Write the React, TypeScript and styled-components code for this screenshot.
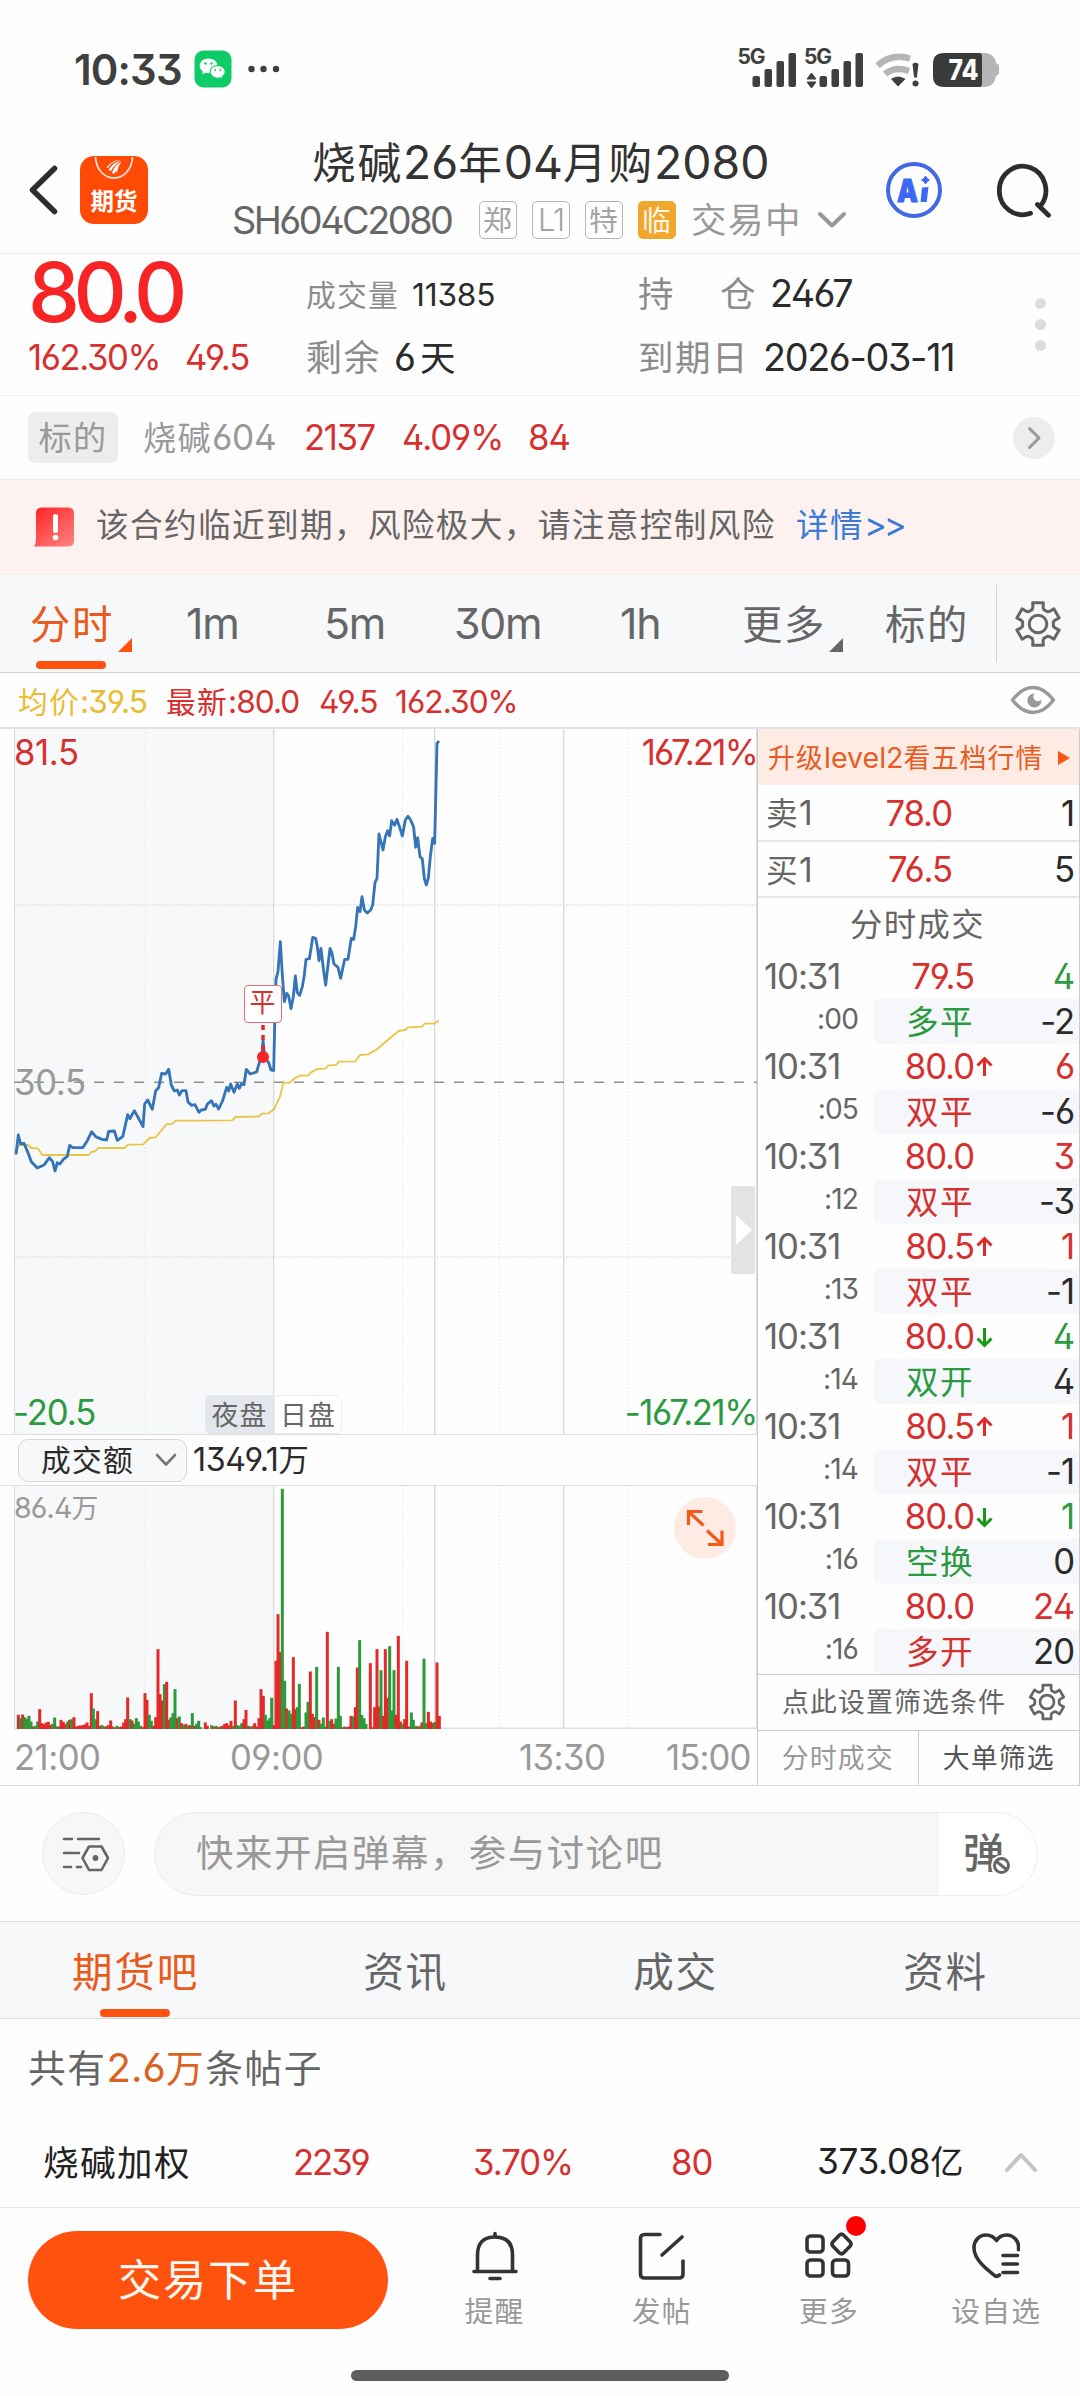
import React from "react";
import styled, { createGlobalStyle } from "styled-components";

const RED = "#d6302f";
const GREEN = "#2c9a41";
const ORANGE = "#ff520e";
const GREY = "#999";
const DARK = "#666";
const INK = "#2b2b2b";

const Global = createGlobalStyle`
  * { box-sizing: border-box; }
  html, body { margin: 0; padding: 0; background: #fefefe; }
  body { font-family: Inter, "Noto Sans CJK SC", sans-serif; }
  svg { display: block; flex: none; }
`;

/* ---------- text ---------- */

const Label = styled.span<{ $size: number; $color?: string; $weight?: number; $ls?: number; $lh?: number }>`
  display: inline-block;
  flex: none;
  white-space: pre;
  font-family: Inter, "Noto Sans CJK SC", sans-serif;
  font-feature-settings: "ss01" 1, "calt" 0;
  font-size: ${(p) => p.$size * 1.02}px;
  line-height: ${(p) => p.$size * (p.$lh ?? 1.2)}px;
  letter-spacing: ${(p) => p.$ls ?? -0.03}em;
  font-weight: ${(p) => p.$weight ?? 400};
  color: ${(p) => p.$color ?? "inherit"};
`;

const Han = styled.span<{ $size: number }>`
  font-family: "Noto Sans CJK SC", sans-serif;
  font-size: ${(p) => p.$size * 0.96}px;
  letter-spacing: ${(p) => p.$size * 0.04}px;
  line-height: 0;
`;

type TProps = { s: number; c?: string; w?: number; ls?: number; lh?: number; children: string };

function T({ s, c, w, ls, lh, children }: TProps) {
  const runs = children.split(/([\u3000-\u9fff\uff00-\uffef]+)/).filter(Boolean);
  return (
    <Label $size={s} $color={c} $weight={w} $ls={ls} $lh={lh}>
      {runs.map((r, i) => (/[\u3000-\u9fff\uff00-\uffef]/.test(r) ? <Han key={i} $size={s}>{r}</Han> : r))}
    </Label>
  );
}

/* ---------- layout parts ---------- */

const Screen = styled.main`
  width: 1080px;
  height: 2396px;
  display: flex;
  flex-direction: column;
  background: #fefefe;
  color: ${INK};
  overflow: hidden;
`;

const Bar = styled.div<{ $h: number; $bg?: string; $line?: string; $pl?: number }>`
  display: flex;
  align-items: center;
  flex: none;
  height: ${(p) => p.$h}px;
  padding-left: ${(p) => p.$pl ?? 0}px;
  background: ${(p) => p.$bg ?? "transparent"};
  border-bottom: ${(p) => (p.$line ? `1px solid ${p.$line}` : "none")};
`;

const Cell = styled.div<{ $w: number; $align?: string; $pt?: number; $pb?: number }>`
  display: flex;
  align-items: center;
  flex: none;
  width: ${(p) => p.$w}px;
  padding-top: ${(p) => p.$pt ?? 0}px;
  padding-bottom: ${(p) => p.$pb ?? 0}px;
  justify-content: ${(p) => p.$align ?? "flex-start"};
`;

const StatusBar = styled.header`
  display: flex;
  align-items: center;
  height: 138px;
  padding-left: 74px;
`;

const HeaderBar = styled.header`
  display: flex;
  height: 116px;
  border-bottom: 1px solid #ebebeb;
`;

const HeaderSide = styled.div<{ $w: number; $pl: number; $gap: number }>`
  width: ${(p) => p.$w}px;
  padding: 0 0 0 ${(p) => p.$pl}px;
  height: 104px;
  display: flex;
  align-items: center;
  gap: ${(p) => p.$gap}px;
`;

const TitleBlock = styled.div`
  width: 656px;
  display: flex;
  flex-direction: column;
`;

const TitleLine = styled.div`
  height: 48px;
  display: flex;
  align-items: center;
  padding-left: 90px;
`;

const SubLine = styled.div`
  height: 68px;
  display: flex;
  align-items: center;
  padding-left: 10px;
`;

const Badge = styled.span<{ $solid?: boolean }>`
  width: 38px;
  height: 38px;
  margin-right: 15px;
  border-radius: 5px;
  border: 1.5px solid ${(p) => (p.$solid ? "#f0a72c" : "#b5b5b5")};
  background: ${(p) => (p.$solid ? "#f0a72c" : "transparent")};
  color: ${(p) => (p.$solid ? "#fff6e6" : "#a3a3a3")};
  display: flex;
  align-items: center;
  justify-content: center;
`;

const QuoteGrid = styled.section`
  display: grid;
  grid-template-columns: 306px 332px 380px 62px;
  height: 142px;
  border-bottom: 1px solid #f1f1f1;
`;

const QuoteCol = styled.div<{ $pl?: number }>`
  display: flex;
  flex-direction: column;
  padding-left: ${(p) => p.$pl ?? 0}px;
`;

const Line = styled.div<{ $h: number }>`
  display: flex;
  align-items: center;
  height: ${(p) => p.$h}px;
`;

const Dots = styled.div`
  display: flex;
  flex-direction: column;
  align-items: center;
  gap: 10px;
  padding: 44px 18px 0 0;
`;

const Dot = styled.i`
  width: 11px;
  height: 11px;
  border-radius: 50%;
  background: #ddd;
`;

const GreyTag = styled.span`
  width: 90px;
  height: 51px;
  border-radius: 7px;
  background: #ededed;
  display: flex;
  align-items: center;
  justify-content: center;
`;

const RoundArrow = styled.span`
  width: 42px;
  height: 42px;
  border-radius: 50%;
  background: #ededed;
  display: flex;
  align-items: center;
  justify-content: center;
`;

const PeriodTab = styled.div<{ $w: number; $active?: boolean }>`
  position: relative;
  width: ${(p) => p.$w}px;
  height: 97px;
  flex: none;
  display: flex;
  align-items: center;
  color: ${(p) => (p.$active ? "#ea5a1b" : DARK)};
`;

const Corner = styled.i<{ $x: number; $c: string }>`
  position: absolute;
  left: ${(p) => p.$x}px;
  top: 63px;
  width: 14px;
  height: 14px;
  background: ${(p) => p.$c};
  clip-path: polygon(100% 0, 100% 100%, 0 100%);
`;

const Underline = styled.i<{ $x: number; $y: number; $h: number }>`
  position: absolute;
  left: ${(p) => p.$x}px;
  top: ${(p) => p.$y}px;
  width: 70px;
  height: ${(p) => p.$h}px;
  border-radius: 4px;
  background: ${ORANGE};
`;

const VRule = styled.i`
  width: 1px;
  height: 77px;
  background: #d0d2d6;
`;

const Market = styled.section`
  display: flex;
  height: 1059px;
  border-top: 2px solid #e3e3e3;
  border-bottom: 1px solid #d9d9d9;
`;

const ChartSide = styled.div`
  width: 757px;
  display: flex;
  flex-direction: column;
`;

const Plot = styled.div<{ $h: number }>`
  position: relative;
  height: ${(p) => p.$h}px;
`;

const Pin = styled.div<{ $x?: number; $r?: number; $y: number }>`
  position: absolute;
  display: flex;
  ${(p) => (p.$r !== undefined ? `right: ${p.$r}px;` : `left: ${p.$x}px;`)}
  top: ${(p) => p.$y}px;
`;

const Marker = styled.div`
  position: absolute;
  left: 244px;
  top: 256px;
  width: 38px;
  height: 38px;
  border: 1.5px solid #dc6f6f;
  border-radius: 4px;
  background: #fff;
  display: flex;
  justify-content: center;
`;

const Sessions = styled.div`
  position: absolute;
  left: 205px;
  bottom: 0;
  display: flex;
`;

const Session = styled.span<{ $night?: boolean }>`
  width: ${(p) => (p.$night ? 69 : 68)}px;
  height: 39px;
  display: flex;
  align-items: center;
  justify-content: center;
  color: ${DARK};
  background: ${(p) => (p.$night ? "#e3e6ed" : "#fff")};
  border: ${(p) => (p.$night ? "none" : "1px solid #ebebeb")};
  border-radius: ${(p) => (p.$night ? "6px 0 0 6px" : "0 6px 6px 0")};
`;

const Handle = styled.div`
  position: absolute;
  left: 731px;
  top: 457px;
  width: 24px;
  height: 88px;
  border-radius: 2px;
  background: #e3e3e3;
  display: flex;
  align-items: center;
  justify-content: flex-end;
  padding-right: 3px;
`;

const IndicatorRow = styled.div`
  height: 52px;
  display: flex;
  align-items: center;
  padding-left: 18px;
  border-top: 1px solid #ddd;
  border-bottom: 1px solid #ddd;
`;

const Picker = styled.div`
  width: 169px;
  height: 43px;
  border: 1px solid #d3d6da;
  border-radius: 10px;
  background: #f7f8fa;
  display: flex;
  align-items: center;
  justify-content: space-between;
  padding: 0 8px 0 22px;
  margin-right: 6px;
`;

const FullScreen = styled.div`
  position: absolute;
  left: 674px;
  top: 11px;
  width: 62px;
  height: 62px;
  border-radius: 50%;
  background: #feebe4;
  display: flex;
  align-items: center;
  justify-content: center;
`;

const Book = styled.aside`
  width: 323px;
  border-left: 1px solid #ccc;
  border-right: 1px solid #ccc;
  display: flex;
  flex-direction: column;
`;

const Promo = styled.div`
  height: 56px;
  background: #feece4;
  display: flex;
  align-items: center;
  padding: 1px 0 0 10px;
  gap: 15px;
`;

const LevelRow = styled.div<{ $h: number }>`
  height: ${(p) => p.$h}px;
  border-bottom: 2px solid #e6e6e6;
  display: grid;
  grid-template-columns: 100px 86px 1fr;
  align-items: center;
  padding: 1px 5px 0 8px;
  > :nth-child(n + 2) { justify-self: end; }
`;

const BookTitle = styled.div`
  height: 56px;
  display: flex;
  align-items: center;
  justify-content: center;
  padding: 0 2px 3px 0;
`;

const Trade = styled.div`
  height: 90px;
  display: grid;
  grid-template: 45px 45px / 116px 1fr;
`;

const TradeTime = styled.div<{ $sec?: boolean }>`
  display: flex;
  align-items: center;
  padding: ${(p) => (p.$sec ? "0 16px 5px 0" : "0 0 0 6px")};
  justify-content: ${(p) => (p.$sec ? "flex-end" : "flex-start")};
`;

const TradeCell = styled.div<{ $shade?: boolean }>`
  display: grid;
  grid-template-columns: 100px 20px 1fr;
  align-items: center;
  padding-right: 5px;
  border-radius: 6px 0 0 6px;
  background: ${(p) => (p.$shade ? "#f6f7fa" : "transparent")};
  > :first-child { justify-self: end; }
  > :last-child { justify-self: end; }
`;

const FilterRow = styled.div`
  height: 57px;
  border-top: 1px solid #ccc;
  border-bottom: 1px solid #ccc;
  display: flex;
  align-items: center;
  padding: 0 0 1px 24px;
  gap: 22px;
`;

const BookTabs = styled.div`
  flex: 1;
  display: grid;
  grid-template-columns: 1fr 1fr;
`;

const BookTab = styled.div<{ $first?: boolean }>`
  display: flex;
  align-items: center;
  justify-content: center;
  border-right: ${(p) => (p.$first ? "1px solid #ccc" : "none")};
`;

const ChatRow = styled.section`
  height: 136px;
  display: flex;
  align-items: center;
  padding-left: 42px;
  gap: 29px;
  border-bottom: 1px solid #dcdde0;
`;

const ChatSettings = styled.div`
  width: 83px;
  height: 83px;
  border-radius: 50%;
  border: 1px solid #ececec;
  background: #f7f7f7;
  display: flex;
  align-items: center;
  justify-content: center;
  padding-left: 4px;
`;

const ChatPill = styled.div`
  width: 884px;
  height: 84px;
  border-radius: 42px;
  border: 1.5px solid #ececec;
  background: #f7f7f7;
  display: flex;
  align-items: center;
  overflow: hidden;
`;

const ChatHint = styled.div`
  flex: 1;
  padding-left: 41px;
`;

const ChatToggle = styled.div`
  position: relative;
  width: 100px;
  height: 82px;
  border-left: 1.5px solid #ececec;
  background: #fff;
  display: flex;
  align-items: center;
  padding: 0 0 2px 25px;
`;

const BanBadge = styled.span`
  position: absolute;
  left: 53px;
  top: 42px;
`;

const SectionTabs = styled.nav`
  height: 97px;
  display: grid;
  grid-template-columns: repeat(4, 1fr);
  background: #f7f8fa;
  border-bottom: 1px solid #dcdde0;
`;

const SectionTab = styled.div<{ $active?: boolean }>`
  position: relative;
  display: flex;
  align-items: center;
  justify-content: center;
  padding: 3px 0 0 1px;
  color: ${(p) => (p.$active ? "#ea5a1b" : DARK)};
`;

const ActionBar = styled.footer`
  height: 140px;
  display: flex;
  align-items: flex-start;
  padding: 23px 0 0 28px;
`;

const TradeButton = styled.button`
  width: 360px;
  height: 98px;
  border: 0;
  padding: 0;
  border-radius: 49px;
  background: ${ORANGE};
  display: flex;
  align-items: center;
  justify-content: center;
  margin-right: 23px;
`;

const Action = styled.div`
  position: relative;
  width: 167.3px;
  display: flex;
  flex-direction: column;
  align-items: center;
  gap: 12px;
`;

const Notice = styled.i`
  position: absolute;
  left: 101px;
  top: -15px;
  width: 20px;
  height: 20px;
  border-radius: 50%;
  background: #fe0000;
`;

const HomeBar = styled.div`
  width: 378px;
  height: 11px;
  border-radius: 6px;
  background: #5e5e5e;
  margin: 22px auto 0;
`;

/* ---------- icons ---------- */

const StatusSvg = styled.svg`
  overflow: visible;
`;

function Chevron({ w, h, d, c, sw }: { w: number; h: number; d: string; c: string; sw: number }) {
  return (
    <svg width={w} height={h} viewBox={`0 0 ${w} ${h}`} fill="none" stroke={c} strokeWidth={sw} strokeLinecap="round" strokeLinejoin="round">
      <path d={d} />
    </svg>
  );
}

function Gear({ size, sw }: { size: number; sw: number }) {
  const pts: string[] = [];
  for (let k = 0; k < 6; k++) {
    const a = k * 60 - 90;
    const step: [number, number][] = [[-22, 15.5], [-17, 17.5], [-14, 22], [14, 22], [17, 17.5], [22, 15.5]];
    step.forEach(([da, r]) => {
      const t = ((a + da) * Math.PI) / 180;
      pts.push(`${(24 + r * Math.cos(t)).toFixed(2)},${(24 + r * Math.sin(t)).toFixed(2)}`);
    });
  }
  return (
    <svg width={size} height={size} viewBox="0 0 48 48" fill="none" stroke="#666" strokeWidth={sw} strokeLinejoin="round">
      <polygon points={pts.join(" ")} />
      <circle cx="24" cy="24" r="8.8" />
    </svg>
  );
}

function Signal() {
  return (
    <g fill="#3f3f3f">
      <rect x="0" y="23" width="7.5" height="11" rx="2" />
      <rect x="12" y="16" width="7.5" height="18" rx="2" />
      <rect x="24" y="8" width="7.5" height="26" rx="2" />
      <rect x="36" y="0" width="7.5" height="34" rx="2" />
    </g>
  );
}

const svgText = { fontFamily: "Inter, sans-serif" };

function StatusIcons() {
  return (
    <StatusSvg width="264" height="64" viewBox="736 36 264 64">
      <text x="737.5" y="63" fontSize="21" fontWeight="700" fill="#3f3f3f" textLength="28" {...svgText}>5G</text>
      <g transform="translate(752.5 52)"><Signal /></g>
      <text x="804" y="63" fontSize="21" fontWeight="700" fill="#3f3f3f" textLength="28" {...svgText}>5G</text>
      <path d="M807 78l4.500-6 4.500 6zM807 81l4.500 6 4.500-6z" fill="#3f3f3f" stroke="#3f3f3f" strokeWidth="1" strokeLinejoin="round" />
      <g transform="translate(819.5 52)"><Signal /></g>
      <path d="M877.500 64.500Q892 52 910 57.500" fill="none" stroke="#b5b5b5" strokeWidth="6.500" />
      <path d="M885 73Q895 65 909 70" fill="none" stroke="#b5b5b5" strokeWidth="6.500" />
      <path d="M891 78Q898 73 905.500 78L898 85.500Z" fill="#3f3f3f" />
      <path d="M912.500 63q3-2.500 6 0l-1.600 13.500h-2.800z" fill="#3f3f3f" />
      <circle cx="915.500" cy="82.500" r="3" fill="#3f3f3f" />
      <path d="M982 52h3q9 0 11 10l3 2v9l-3 2q-2 11-11 11h-3z" fill="#b5b5b5" />
      <path d="M944 52h36q2 0 2 2v30q0 2-2 2h-36q-11 0-11-11V63q0-11 11-11z" fill="#3a3a3a" />
      <text x="948.500" y="79" fontSize="29" fontWeight="800" fill="#fff" textLength="30" lengthAdjust="spacingAndGlyphs" {...svgText}>74</text>
    </StatusSvg>
  );
}

function WeChat() {
  return (
    <svg width="38" height="38" viewBox="0 0 38 38">
      <rect x=".5" y=".5" width="37" height="37" rx="9" fill="#0dcb66" />
      <path d="M14.500 8.500c-5.200 0-8.800 3.200-8.800 7.300 0 2.500 1.300 4.400 3.300 5.700l-.8 3 3.200-1.700c1 .3 2 .4 3.100.4 5.200 0 8.900-3.200 8.900-7.400s-3.700-7.300-8.900-7.300z" fill="#fff" />
      <path d="M23.700 15.500c-4.400 0-7.600 2.800-7.600 6.400s3.200 6.400 7.600 6.400c.9 0 1.800-.1 2.700-.4l2.700 1.400-.7-2.500c1.800-1.200 2.900-2.900 2.900-4.900 0-3.600-3.200-6.400-7.600-6.400z" fill="#fff" stroke="#0dcb66" strokeWidth="1.200" />
      <g fill="#0dcb66"><circle cx="11.500" cy="13.500" r="1.200" /><circle cx="17.500" cy="13.500" r="1.200" /><circle cx="21.200" cy="20" r="1" /><circle cx="26.300" cy="20" r="1" /></g>
    </svg>
  );
}

function AppLogo() {
  return (
    <svg width="68" height="68" viewBox="0 0 68 68">
      <rect width="68" height="68" rx="14" fill="#ff4a06" />
      <path d="M15.500 1C16 13 24 22 34 22S52 13 52.500 1" fill="none" stroke="#ffe3d8" strokeWidth="1.800" />
      <path d="M26.500 11.500Q33 3.500 40 4Q31 6 28 12zM28.500 14Q33 6 41 5Q34 8.500 31 15zM32 17Q34 9 41.500 6Q38 10 37 16.500Q35 14 34.500 18z" fill="#fff" />
      <text x="34" y="54" fontSize="23.500" fontWeight="700" fill="#fff" textAnchor="middle" fontFamily='"Noto Sans CJK SC", sans-serif'>期货</text>
    </svg>
  );
}

function AiIcon() {
  return (
    <svg width="56" height="56" viewBox="0 0 56 56">
      <circle cx="28" cy="28" r="26" fill="none" stroke="#4069e8" strokeWidth="4" />
      <text x="11" y="39.500" fontSize="31" fontWeight="900" fill="#3b68f5" stroke="#3b68f5" strokeWidth="1" textLength="21" lengthAdjust="spacingAndGlyphs" {...svgText}>A</text>
      <path d="M36 25.500l6.500-.5-1.800 15h-6.200z" fill="#3b68f5" />
      <path d="M39.500 14q1 3 4 4-3 1-4 4-1-3-4-4 3-1 4-4z" fill="#3b68f5" stroke="#3b68f5" />
    </svg>
  );
}

function SearchIcon() {
  return (
    <svg width="54" height="56" viewBox="0 0 54 56" fill="none" stroke="#2d2d2d" strokeWidth="4.800" strokeLinecap="round">
      <path d="M33.500 51.200A23.300 24.200 0 1 1 43.800 43.500" />
      <path d="M40.500 42.500L51.500 53.200" />
    </svg>
  );
}

function AlertIcon() {
  return (
    <svg width="42" height="40" viewBox="0 0 42 40">
      <defs>
        <linearGradient id="alert" x1="0" y1="0" x2=".8" y2="1">
          <stop offset="0" stopColor="#ff2222" />
          <stop offset="1" stopColor="#ff7c7c" />
        </linearGradient>
      </defs>
      <path d="M8 .5h26q6 0 6 6v27q0 6-6 6H0q2-3 2-8v-25q0-6 6-6z" fill="url(#alert)" />
      <path d="M21.500 9.500v14" stroke="#fff" strokeWidth="5" strokeLinecap="round" />
      <circle cx="21.500" cy="30.500" r="2.800" fill="#fff" />
    </svg>
  );
}

function Eye() {
  return (
    <svg width="46" height="30" viewBox="0 0 46 30">
      <path d="M2.500 15Q12 2.500 23 2.500T43.500 15Q34 27.500 23 27.500T2.500 15z" fill="none" stroke="#999" strokeWidth="3.400" strokeLinejoin="round" />
      <path d="M24.500 8.500a7 7 0 1 0 6.800 6.200a4 4 0 0 1-6.800-6.200z" fill="#999" />
    </svg>
  );
}

const stroke = { fill: "none", stroke: "#333", strokeWidth: 3.6, strokeLinecap: "round" as const, strokeLinejoin: "round" as const };

const ACTION_ICONS = {
  bell: (
    <svg width="48" height="50" viewBox="0 0 48 50" {...stroke}>
      <path d="M24 2.500v3M6.500 40V24Q6.500 6 24 6T41.500 24V40M3 40.500h42M19 47.500h10" />
    </svg>
  ),
  post: (
    <svg width="48" height="50" viewBox="0 0 48 50" {...stroke}>
      <path d="M22 3.500H6.500Q2.500 3.500 2.500 7.500V43Q2.500 47 6.500 47H41Q45 47 45 43V30M24 24L44 6" />
    </svg>
  ),
  more: (
    <svg width="48" height="50" viewBox="0 0 48 50" {...stroke}>
      <rect x="2" y="5" width="16" height="16" rx="3.500" />
      <rect x="2" y="29" width="16" height="16" rx="3.500" />
      <rect x="27.500" y="29" width="16" height="16" rx="3.500" />
      <path d="M34.300 4.200Q36.500 2 38.700 4.200L45 10.800Q47 13 45 15.200L38.700 21.800Q36.500 24 34.300 21.800L28 15.200Q26 13 28 10.800z" />
    </svg>
  ),
  heart: (
    <svg width="48" height="50" viewBox="0 0 48 50" {...stroke}>
      <path d="M46.500 18.500C47.500 10 41.500 4 34.500 4Q28 4 24.500 9.500Q20.500 4 14 4C7 4 1.500 10 2 17.500C2.500 29 15 38.500 22 44Q24.500 46.500 27.500 44M31 24.500H45.500M31 33H45.500M31 41.500H45.500" />
    </svg>
  ),
};

/* ---------- data ---------- */

const PRICE =
  "48,1303 55,1245 62,1272 72,1270 84,1298 94,1325 112,1344 133,1334 148,1313 158,1325 165,1353 172,1328 180,1332 190,1318 202,1309 209,1276 218,1283 248,1283 262,1262 275,1235 287,1250 306,1258 320,1260 326,1234 343,1233 352,1261 368,1250 374,1225 383,1184 390,1196 403,1172 412,1188 429,1220 434,1152 443,1140 457,1168 467,1112 476,1103 485,1060 497,1062 506,1048 514,1095 523,1113 532,1110 538,1125 546,1112 558,1112 564,1146 574,1156 585,1154 597,1177 604,1170 616,1168 622,1153 634,1142 642,1158 648,1153 656,1167 668,1142 680,1102 686,1113 692,1092 702,1117 712,1092 718,1105 724,1092 732,1094 739,1048 750,1062 770,1056 778,1028 786,1010 789,960 794,1010 806,1028 813,1050 821,1052 824,920 828,778 834,755 841,665 847,765 853,845 860,820 866,828 873,866 880,830 886,768 892,818 899,826 907,800 913,765 918,718 928,716 934,680 938,652 947,655 952,680 957,722 963,685 970,745 977,795 984,735 990,685 996,700 1002,732 1014,742 1022,775 1034,718 1044,718 1054,655 1061,658 1067,620 1073,562 1080,575 1086,530 1093,570 1102,579 1112,570 1118,555 1125,488 1131,475 1137,342 1149,390 1156,350 1163,332 1169,348 1175,302 1184,316 1191,298 1200,325 1207,348 1216,300 1224,289 1232,300 1241,322 1247,382 1253,353 1260,410 1267,417 1273,475 1279,495 1285,475 1291,410 1298,355 1304,370 1308,200 1311,70 1317,63";

const AVERAGE =
  "48,1303 56,1275 84,1275 94,1284 113,1285 127,1305 266,1305 274,1296 285,1294 295,1284 374,1284 384,1274 430,1273 448,1254 467,1252 499,1213 518,1211 527,1202 697,1201 706,1191 776,1190 785,1181 806,1180 822,1168 840,1130 850,1088 870,1088 880,1078 898,1067 924,1067 932,1058 952,1047 976,1046 985,1036 1008,1035 1016,1025 1066,1024 1080,1005 1104,1003 1128,990 1160,963 1196,933 1216,930 1224,922 1266,920 1274,911 1304,911 1316,901";

const VOLUME =
  "55:1035r 61:1045g 68:1034r 74:1042g 81:1047g 87:1038g 93:1055g 100:1070r 106:1068g 113:1055g 119:1018r 126:1060r 132:1063r 139:1058r 145:1056r 152:1065r 158:1062g 164:1043g 171:1070r 177:1070g 183:1050r 190:1056r 196:1063r 203:1055g 209:1050r 215:1048g 222:1042r 228:1070r 235:1068r 241:1067r 248:1066r 254:1064r 261:1058r 267:1068r 274:970r 280:1016g 287:1048g 293:1024r 300:1068r 306:1066g 313:1070g 319:1070r 325:1066r 332:1052r 338:1070r 345:1072g 351:1068g 358:1072r 364:1070r 371:1058r 377:1048r 383:983r 390:1048g 396:1052r 403:1062g 409:1045g 415:1055g 422:1068g 428:1072r 435:970r 441:990r 448:1035g 454:1053g 461:1068r 467:1042r 474:838r 480:973r 487:992r 493:943g 500:936r 506:1050r 512:1043g 519:1030g 525:958g 532:1045r 538:1040g 545:1060r 551:1065g 558:1062r 564:1068g 570:1066r 577:1030g 583:1068r 590:1062g 596:1053g 602:1072g 616:1058r 622:1068r 635:1066g 641:1070r 648:1068g 654:1072r 661:1070g 667:1068r 674:1062r 680:1060r 687:1066r 693:1053r 700:1068g 706:992r 712:1066g 719:1068g 725:1060g 732:1048r 738:1020r 745:1068g 751:1070r 758:1068g 764:1060r 771:1070r 777:1045r 783:958r 790:978r 796:1035g 803:1052g 809:1045g 815:984g 822:1066r 828:873r 834:733r 841:847r 847:357g 854:933g 860:1016r 867:1022g 873:1032g 880:862r 886:1018r 892:1012g 898:942g 905:1072r 912:1070r 918:1028g 924:996g 931:905r 937:1032r 944:1042r 950:891g 957:1050r 963:1062g 970:1043g 976:1070g 982:786r 989:1053g 995:1048r 1002:1062r 1008:1046g 1015:891g 1021:1038g 1028:1072r 1034:1070g 1040:1072r 1047:1070r 1053:1038r 1060:1040g 1066:1012r 1072:893r 1079:811g 1085:1035g 1092:1045g 1098:1062g 1111:880r 1118:1072r 1124:1012r 1131:838r 1137:1010r 1143:901g 1150:1038r 1156:838r 1162:984r 1169:829g 1175:1022g 1182:901g 1188:1035r 1195:798r 1201:1055r 1207:1062g 1214:1048r 1220:873r 1227:1070r 1234:1028g 1240:1050g 1247:1068g 1253:1070r 1260:1068g 1266:1058r 1272:866g 1279:1060g 1285:1026r 1292:1055r 1298:1060r 1304:1057g 1311:878r 1318:1038r"
    .split(" ")
    .map((v) => {
      const [x, rest] = v.split(":");
      return { x: Number(x) / 3, h: (1079 - parseInt(rest, 10)) / 3, up: rest.endsWith("r") };
    });

type TradeRow = { sec: string; price: string; dir?: "up" | "down"; vol: string; kind: string; oi: string; buy: boolean };

const TRADES: TradeRow[] = [
  { sec: ":00", price: "79.5", vol: "4", kind: "多平", oi: "-2", buy: false },
  { sec: ":05", price: "80.0", dir: "up", vol: "6", kind: "双平", oi: "-6", buy: true },
  { sec: ":12", price: "80.0", vol: "3", kind: "双平", oi: "-3", buy: true },
  { sec: ":13", price: "80.5", dir: "up", vol: "1", kind: "双平", oi: "-1", buy: true },
  { sec: ":14", price: "80.0", dir: "down", vol: "4", kind: "双开", oi: "4", buy: false },
  { sec: ":14", price: "80.5", dir: "up", vol: "1", kind: "双平", oi: "-1", buy: true },
  { sec: ":16", price: "80.0", dir: "down", vol: "1", kind: "空换", oi: "0", buy: false },
  { sec: ":16", price: "80.0", vol: "24", kind: "多开", oi: "20", buy: true },
];

/* ---------- charts ---------- */

const SOLID_X = [273.7, 434.7, 563.7];
const DOTTED_X = [145.2, 402.7, 499.3, 628.3];

function GridLines({ h }: { h: number }) {
  return (
    <>
      <rect x="14" y="0" width="260" height={h} fill="#f7f8fa" />
      <path d={`M14.500 0V${h}M756.500 0V${h}`} stroke="#ddd" />
      {SOLID_X.map((x) => <path key={x} d={`M${x} 0V${h}`} stroke="#d9d9d9" strokeWidth="1.300" />)}
      {DOTTED_X.map((x) => <path key={x} d={`M${x} 0V${h}`} stroke="#dcdcdc" strokeDasharray="1 2.700" />)}
    </>
  );
}

function PriceChart() {
  return (
    <Plot $h={705}>
      <svg width="757" height="705" viewBox="0 0 757 705" fill="none">
        <GridLines h={705} />
        <path d="M14 176H757M14 528H757" stroke="#dedede" strokeWidth="1.500" strokeDasharray="1.500 1.500" />
        <path d="M14 353.300H757" stroke="#8f8f8f" strokeWidth="1.500" strokeDasharray="10 10" />
        <g transform="translate(0 -9) scale(.33333)" strokeLinejoin="round">
          <polyline points={AVERAGE} stroke="#e9c544" strokeWidth="5.500" />
          <polyline points={PRICE} stroke="#3674b8" strokeWidth="8.500" />
        </g>
        <path d="M263 296v26" stroke={RED} strokeWidth="3.500" strokeDasharray="5 5" />
        <circle cx="263" cy="328" r="6" fill="#f62424" />
      </svg>
      <Pin $x={14} $y={3}><T s={34} c={RED} ls={-0.01}>81.5</T></Pin>
      <Pin $r={0} $y={3}><T s={34} c={RED} ls={-0.05}>167.21%</T></Pin>
      <Pin $x={14} $y={333}><T s={34} c={GREY} ls={-0.01}>30.5</T></Pin>
      <Pin $x={13} $y={663}><T s={34} c={GREEN}>-20.5</T></Pin>
      <Pin $r={0} $y={663}><T s={34} c={GREEN} ls={-0.04}>-167.21%</T></Pin>
      <Marker><T s={27} c={RED}>平</T></Marker>
      <Sessions>
        <Session $night><T s={28}>夜盘</T></Session>
        <Session><T s={28}>日盘</T></Session>
      </Sessions>
      <Handle>
        <svg width="16" height="30" viewBox="0 0 16 30"><path d="M0 0L16 15L0 30z" fill="#fff" /></svg>
      </Handle>
    </Plot>
  );
}

function VolumeChart() {
  return (
    <Plot $h={243}>
      <svg width="757" height="243" viewBox="0 0 757 243" fill="none">
        <GridLines h={242} />
        <path d="M14 242.300H757" stroke="#ddd" strokeWidth="1.500" />
        {VOLUME.map((b) => (
          <rect key={b.x} x={b.x - 1.5} y={243.5 - b.h} width="3" height={b.h} fill={b.up ? "#e22a28" : "#2c9a3a"} />
        ))}
      </svg>
      <Pin $x={14} $y={5}><T s={28} c={GREY} ls={-0.03}>86.4万</T></Pin>
      <FullScreen>
        <svg width="40" height="40" viewBox="0 0 40 40" fill="none" stroke="#f25a1c" strokeWidth="3.200">
          <path d="M3.500 17V3.500H17.500M3.500 3.500L18.500 17.500M37 22.500V36.500H23M37 36.500L22 22.500" />
        </svg>
      </FullScreen>
    </Plot>
  );
}

function Arrow({ dir }: { dir?: "up" | "down" }) {
  if (!dir) return <span />;
  return (
    <svg width="20" height="22" viewBox="0 0 20 22" fill="none" stroke={dir === "up" ? "#e02826" : "#169a16"} strokeWidth="3">
      {dir === "up" ? <path d="M10.500 20V3M3.500 9.500L10.500 2.500L17.500 9.500" /> : <path d="M10.500 2V19M3.500 12.500L10.500 19.500L17.500 12.500" />}
    </svg>
  );
}

/* ---------- page ---------- */

export default function App() {
  return (
    <Screen>
      <Global />
      <StatusBar>
        <Cell $w={120} $pt={2}><T s={41} w={600} c="#3f3f3f" ls={-0.02}>10:33</T></Cell>
        <Cell $w={54}><WeChat /></Cell>
        <Cell $w={488}>
          <svg width="32" height="8" viewBox="0 0 32 8" fill="#3f3f3f"><circle cx="3.500" cy="4" r="3.200" /><circle cx="15.500" cy="4" r="3.200" /><circle cx="28" cy="4" r="3.200" /></svg>
        </Cell>
        <StatusIcons />
      </StatusBar>

      <HeaderBar>
        <HeaderSide $w={222} $pl={28} $gap={22}>
          <Chevron w={30} h={50} d="M26.500 3.500L4.500 25L26.500 46.500" c="#2d2d2d" sw={5.5} />
          <AppLogo />
        </HeaderSide>
        <TitleBlock>
          <TitleLine><T s={45.5} c="#333" ls={0}>烧碱26年04月购2080</T></TitleLine>
          <SubLine>
            <Cell $w={247} $pt={2}><T s={37} c={DARK} ls={-0.065}>SH604C2080</T></Cell>
            <Badge><T s={30}>郑</T></Badge>
            <Badge><T s={30} w={300}>L1</T></Badge>
            <Badge><T s={30}>特</T></Badge>
            <Badge $solid><T s={30}>临</T></Badge>
            <Cell $w={126}><T s={37} c={GREY}>交易中</T></Cell>
            <Chevron w={30} h={20} d="M3 4L15 15.500L27 4" c={GREY} sw={4} />
          </SubLine>
        </TitleBlock>
        <HeaderSide $w={202} $pl={8} $gap={55}>
          <AiIcon />
          <SearchIcon />
        </HeaderSide>
      </HeaderBar>

      <QuoteGrid>
        <QuoteCol $pl={28}>
          <Line $h={76}><T s={81} w={500} c="#f62424" ls={-0.08} lh={0.9}>80.0</T></Line>
          <Line $h={54}>
            <Cell $w={157}><T s={34} c={RED} ls={-0.04}>162.30%</T></Cell>
            <T s={34} c={RED}>49.5</T>
          </Line>
        </QuoteCol>
        <QuoteCol>
          <Line $h={82}><Cell $w={106}><T s={31} c="#8c8c8c">成交量</T></Cell><T s={31} ls={-0.005}>11385</T></Line>
          <Line $h={42}><Cell $w={88}><T s={37.5} c="#8c8c8c">剩余</T></Cell><Cell $w={26}><T s={37}>6</T></Cell><T s={37}>天</T></Line>
        </QuoteCol>
        <QuoteCol>
          <Line $h={78}>
            <Cell $w={82}><T s={37} c="#8c8c8c">持</T></Cell>
            <Cell $w={50}><T s={37} c="#8c8c8c">仓</T></Cell>
            <T s={37} ls={-0.045}>2467</T>
          </Line>
          <Line $h={50}><Cell $w={125}><T s={37} c="#8c8c8c">到期日</T></Cell><T s={37} ls={-0.035}>2026-03-11</T></Line>
        </QuoteCol>
        <Dots><Dot /><Dot /><Dot /></Dots>
      </QuoteGrid>

      <Bar $h={84} $line="#efe9e8" $pl={28}>
        <Cell $w={115}><GreyTag><T s={34.5} c={GREY}>标的</T></GreyTag></Cell>
        <Cell $w={161}><T s={34.5} c={GREY} ls={-0.01}>烧碱604</T></Cell>
        <Cell $w={98}><T s={34} c={RED} ls={-0.04}>2137</T></Cell>
        <Cell $w={126}><T s={34} c={RED}>4.09%</T></Cell>
        <Cell $w={485}><T s={34} c={RED}>84</T></Cell>
        <RoundArrow><Chevron w={16} h={28} d="M3.500 4.500L13 14L3.500 23.500" c={GREY} sw={3} /></RoundArrow>
      </Bar>

      <Bar $h={95} $bg="#fdf2f0" $line="#ececec" $pl={34}>
        <Cell $w={62}><AlertIcon /></Cell>
        <Cell $w={700} $pb={6}><T s={34} c={DARK}>该合约临近到期，风险极大，请注意控制风险</T></Cell>
        <Cell $w={120} $pb={6}><T s={34} c="#3a7bd5" ls={-0.09}>{"详情>>"}</T></Cell>
      </Bar>

      <Bar $h={98} $bg="#f7f8fa" $line="#d3d5d8" $pl={30}>
        <PeriodTab $w={156} $active><T s={42}>分时</T><Corner $x={88} $c={ORANGE} /><Underline $x={6} $y={86} $h={8} /></PeriodTab>
        <PeriodTab $w={138}><T s={42}>1m</T></PeriodTab>
        <PeriodTab $w={130}><T s={42}>5m</T></PeriodTab>
        <PeriodTab $w={166}><T s={42}>30m</T></PeriodTab>
        <PeriodTab $w={122}><T s={42}>1h</T></PeriodTab>
        <PeriodTab $w={143}><T s={42}>更多</T><Corner $x={87} $c="#666" /></PeriodTab>
        <PeriodTab $w={111}><T s={42}>标的</T></PeriodTab>
        <VRule />
        <Cell $w={82} $align="center"><Gear size={48} sw={3} /></Cell>
      </Bar>

      <Bar $h={54} $pl={18}>
        <Cell $w={148} $pt={4}><T s={31} c="#e8bd35">均价:39.5</T></Cell>
        <Cell $w={153} $pt={4}><T s={31} c={RED}>最新:80.0</T></Cell>
        <Cell $w={76} $pt={4}><T s={31} c={RED}>49.5</T></Cell>
        <Cell $w={615} $pt={4}><T s={31} c={RED}>162.30%</T></Cell>
        <Eye />
      </Bar>

      <Market>
        <ChartSide>
          <PriceChart />
          <IndicatorRow>
            <Picker><T s={31}>成交额</T><Chevron w={24} h={16} d="M3 3L12 12.500L21 3" c="#777" sw={2.6} /></Picker>
            <T s={31.5} ls={-0.01}>1349.1万</T>
          </IndicatorRow>
          <VolumeChart />
          <Bar $h={56} $pl={14}>
            <Cell $w={216}><T s={34} c={GREY} ls={-0.015}>21:00</T></Cell>
            <Cell $w={289}><T s={34} c={GREY} ls={-0.015}>09:00</T></Cell>
            <Cell $w={147}><T s={34} c={GREY} ls={-0.015}>13:30</T></Cell>
            <T s={34} c={GREY} ls={-0.025}>15:00</T>
          </Bar>
        </ChartSide>

        <Book>
          <Promo>
            <T s={28} c="#e85c24" ls={0}>升级level2看五档行情</T>
            <svg width="12" height="14" viewBox="0 0 12 14"><path d="M0 0L12 7L0 14z" fill={ORANGE} /></svg>
          </Promo>
          <LevelRow $h={57}><T s={33} c={DARK}>卖1</T><T s={34} c={RED}>78.0</T><T s={34}>1</T></LevelRow>
          <LevelRow $h={56}><T s={33} c={DARK}>买1</T><T s={34} c={RED}>76.5</T><T s={34}>5</T></LevelRow>
          <BookTitle><T s={33.7} c={DARK}>分时成交</T></BookTitle>
          {TRADES.map((t, i) => (
            <Trade key={i}>
              <TradeTime><T s={34} c={DARK}>10:31</T></TradeTime>
              <TradeCell>
                <T s={34} c={RED}>{t.price}</T>
                <Arrow dir={t.dir} />
                <T s={34} c={t.buy ? RED : GREEN}>{t.vol}</T>
              </TradeCell>
              <TradeTime $sec><T s={27.5} c={DARK}>{t.sec}</T></TradeTime>
              <TradeCell $shade>
                <T s={34} c={t.buy ? RED : GREEN}>{t.kind}</T>
                <span />
                <T s={34}>{t.oi}</T>
              </TradeCell>
            </Trade>
          ))}
          <FilterRow><T s={28} c={DARK}>点此设置筛选条件</T><Gear size={38} sw={3.4} /></FilterRow>
          <BookTabs>
            <BookTab $first><T s={28} c={GREY}>分时成交</T></BookTab>
            <BookTab><T s={28} c="#555">大单筛选</T></BookTab>
          </BookTabs>
        </Book>
      </Market>

      <ChatRow>
        <ChatSettings>
          <svg width="48" height="36" viewBox="0 0 48 36" fill="none" stroke="#666" strokeWidth="2.600" strokeLinecap="round" strokeLinejoin="round">
            <path d="M2 3h8M16 3h21M2 17h15M2 31h7M15 31h4" />
            <path d="M27 10.500H39.500L46 22L39.500 34H27L20.500 22z" />
            <circle cx="33.500" cy="22" r="1.600" fill="#666" />
          </svg>
        </ChatSettings>
        <ChatPill>
          <ChatHint><T s={39} c={GREY}>快来开启弹幕，参与讨论吧</T></ChatHint>
          <ChatToggle>
            <T s={43} w={500} c={DARK}>弹</T>
            <BanBadge>
              <svg width="21" height="21" viewBox="0 0 21 21">
                <circle cx="10.500" cy="10.500" r="10.500" fill="#fff" />
                <circle cx="10.500" cy="10.500" r="7" fill="#fff" stroke="#666" strokeWidth="3" />
                <path d="M5.500 6.500L15.500 14.500" stroke="#666" strokeWidth="3" />
              </svg>
            </BanBadge>
          </ChatToggle>
        </ChatPill>
      </ChatRow>

      <SectionTabs>
        <SectionTab $active><T s={42.3}>期货吧</T><Underline $x={100} $y={87} $h={8} /></SectionTab>
        <SectionTab><T s={42.3}>资讯</T></SectionTab>
        <SectionTab><T s={42.3}>成交</T></SectionTab>
        <SectionTab><T s={42.3}>资料</T></SectionTab>
      </SectionTabs>

      <Bar $h={98} $pl={28}>
        <T s={39.3} c={DARK}>共有</T>
        <T s={39.3} c="#dc621f" ls={0}>2.6万</T>
        <T s={39.3} c={DARK}>条帖子</T>
      </Bar>
      <Bar $h={91} $line="#e8e8e8" $pl={43}>
        <Cell $w={250}><T s={37} c="#222">烧碱加权</T></Cell>
        <Cell $w={180}><T s={34} c={RED} ls={-0.06}>2239</T></Cell>
        <Cell $w={198}><T s={34} c={RED}>3.70%</T></Cell>
        <Cell $w={146}><T s={34} c={RED}>80</T></Cell>
        <Cell $w={187}><T s={34.5} c="#222" ls={-0.01}>373.08亿</T></Cell>
        <Chevron w={34} h={22} d="M3 19L17 4L31 19" c="#c4c4c4" sw={4} />
      </Bar>

      <ActionBar>
        <TradeButton><T s={45} c="#fff7f0">交易下单</T></TradeButton>
        <Action>{ACTION_ICONS.bell}<T s={30} c={GREY}>提醒</T></Action>
        <Action>{ACTION_ICONS.post}<T s={30} c={GREY}>发帖</T></Action>
        <Action>{ACTION_ICONS.more}<Notice /><T s={30} c={GREY}>更多</T></Action>
        <Action>{ACTION_ICONS.heart}<T s={30} c={GREY}>设自选</T></Action>
      </ActionBar>
      <HomeBar />
    </Screen>
  );
}
